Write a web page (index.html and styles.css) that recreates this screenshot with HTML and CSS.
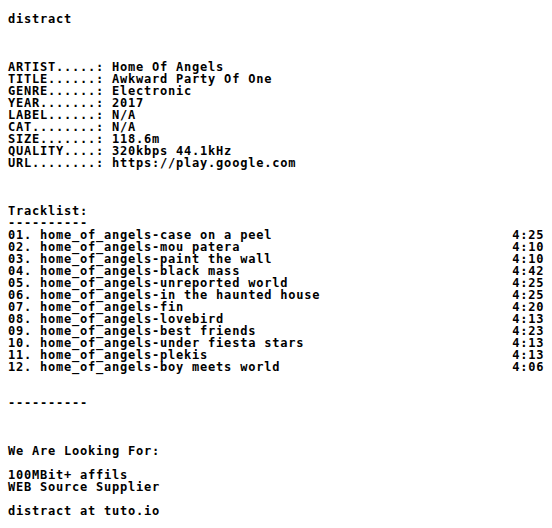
FILE: index.html
```html
<!DOCTYPE html>
<html>
<head>
<meta charset="utf-8">
<link rel="stylesheet" href="styles.css">
</head>
<body>
<pre class="nfo">distract



ARTIST.....: Home Of Angels
TITLE......: Awkward Party Of One
GENRE......: Electronic
YEAR.......: 2017
LABEL......: N/A
CAT........: N/A
SIZE.......: 118.6m
QUALITY....: 320kbps 44.1kHz
URL........: https://play.google.com



Tracklist:
----------
01. home_of_angels-case on a peel                              4:25
02. home_of_angels-mou patera                                  4:10
03. home_of_angels-paint the wall                              4:10
04. home_of_angels-black mass                                  4:42
05. home_of_angels-unreported world                            4:25
06. home_of_angels-in the haunted house                        4:25
07. home_of_angels-fin                                         4:20
08. home_of_angels-lovebird                                    4:13
09. home_of_angels-best friends                                4:23
10. home_of_angels-under fiesta stars                          4:13
11. home_of_angels-plekis                                      4:13
12. home_of_angels-boy meets world                             4:06


----------



We Are Looking For:

100MBit+ affils
WEB Source Supplier

distract at tuto.io</pre>
</body>
</html>
```
FILE: styles.css
```css
html, body {
  margin: 0;
  padding: 0;
  background: #ffffff;
}
.nfo {
  margin: 0;
  padding: 13px 8px 0 8px;
  font-family: "DejaVu Sans Mono", "Liberation Mono", monospace;
  font-weight: bold;
  font-size: 12px;
  letter-spacing: 0.78px;
  line-height: 12px;
  color: #000000;
  white-space: pre;
}
```
